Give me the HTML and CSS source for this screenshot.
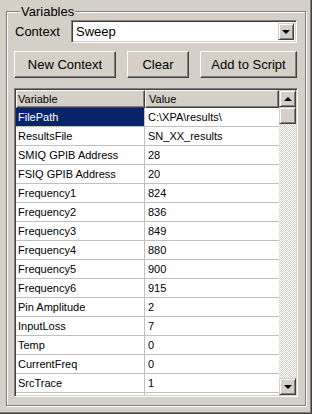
FILE: index.html
```html
<!DOCTYPE html>
<html lang="en">
<head>
    <meta charset="UTF-8">
    <meta name="viewport" content="width=device-width, initial-scale=1.0">
    <title>Variables</title>
    <link rel="stylesheet" href="styles.css">
</head>
<body>
    <div class="panel">
        <fieldset class="group">
            <legend>Variables</legend>

            <div class="context-row">
                <label class="context-label">Context</label>
                <div class="combo">
                    <span class="combo-text">Sweep</span>
                    <span class="combo-btn"><span class="tri-down"></span></span>
                </div>
            </div>

            <div class="button-row">
                <button class="btn btn-new">New Context</button>
                <button class="btn btn-clear">Clear</button>
                <button class="btn btn-add">Add to Script</button>
            </div>

            <div class="grid-box">
                <div class="grid">
                    <div class="grid-head">
                        <div class="hcell col-var">Variable</div>
                        <div class="hcell col-val">Value</div>
                    </div>
                    <div class="row selected">
                        <div class="cell col-var">FilePath</div>
                        <div class="cell col-val">C:\XPA\results\</div>
                    </div>
                    <div class="row">
                        <div class="cell col-var">ResultsFile</div>
                        <div class="cell col-val">SN_XX_results</div>
                    </div>
                    <div class="row">
                        <div class="cell col-var">SMIQ GPIB Address</div>
                        <div class="cell col-val">28</div>
                    </div>
                    <div class="row">
                        <div class="cell col-var">FSIQ GPIB Address</div>
                        <div class="cell col-val">20</div>
                    </div>
                    <div class="row">
                        <div class="cell col-var">Frequency1</div>
                        <div class="cell col-val">824</div>
                    </div>
                    <div class="row">
                        <div class="cell col-var">Frequency2</div>
                        <div class="cell col-val">836</div>
                    </div>
                    <div class="row">
                        <div class="cell col-var">Frequency3</div>
                        <div class="cell col-val">849</div>
                    </div>
                    <div class="row">
                        <div class="cell col-var">Frequency4</div>
                        <div class="cell col-val">880</div>
                    </div>
                    <div class="row">
                        <div class="cell col-var">Frequency5</div>
                        <div class="cell col-val">900</div>
                    </div>
                    <div class="row">
                        <div class="cell col-var">Frequency6</div>
                        <div class="cell col-val">915</div>
                    </div>
                    <div class="row">
                        <div class="cell col-var">Pin Amplitude</div>
                        <div class="cell col-val">2</div>
                    </div>
                    <div class="row">
                        <div class="cell col-var">InputLoss</div>
                        <div class="cell col-val">7</div>
                    </div>
                    <div class="row">
                        <div class="cell col-var">Temp</div>
                        <div class="cell col-val">0</div>
                    </div>
                    <div class="row">
                        <div class="cell col-var">CurrentFreq</div>
                        <div class="cell col-val">0</div>
                    </div>
                    <div class="row">
                        <div class="cell col-var">SrcTrace</div>
                        <div class="cell col-val">1</div>
                    </div>
                    <div class="row">
                        <div class="cell col-var"></div>
                        <div class="cell col-val"></div>
                    </div>
                </div>

                <div class="vscroll">
                    <div class="sbtn"><span class="tri-up"></span></div>
                    <div class="thumb"></div>
                    <div class="track"></div>
                    <div class="sbtn"><span class="tri-down"></span></div>
                </div>
            </div>
        </fieldset>
    </div>
</body>
</html>
```

FILE: styles.css
```css
body {
    margin: 0;
    background-color: #d4d0c8;
    font-family: "Liberation Sans", Arial, sans-serif;
    color: #000;
}

.panel {
    width: 312px;
    height: 414px;
    box-sizing: border-box;
    padding: 0 6px 0 6px;
    box-shadow: inset -1px -1px #404040, inset -2px -2px #808080;
    overflow: hidden;
}

/* group box with etched border */
.group {
    margin: 4px 0 0 0;
    padding: 1px 7px 7px 7px;
    width: 300px;
    height: 402px;
    box-sizing: border-box;
    border: 1px solid #808080;
    box-shadow: inset 1px 1px #fff, 1px 1px #fff;
}

.group legend {
    font-size: 13px;
    line-height: 15px;
    padding: 0 1px;
    margin-left: 6px;
    background-color: #d4d0c8;
}

.context-row {
    display: flex;
    align-items: center;
    height: 23px;
}

.context-label {
    font-size: 13px;
    width: 56px;
    padding-left: 1px;
}

.combo {
    flex: 1;
    height: 23px;
    box-sizing: border-box;
    margin-right: 1px;
    background-color: #fff;
    border: 1px solid;
    border-color: #808080 #fff #fff #808080;
    box-shadow: inset 1px 1px #404040, inset -1px -1px #d4d0c8;
    display: flex;
    align-items: center;
    padding: 2px 2px 2px 4px;
}

.combo-text {
    flex: 1;
    font-size: 13px;
}

.combo-btn {
    width: 16px;
    height: 17px;
    box-sizing: border-box;
    background-color: #d4d0c8;
    border: 1px solid;
    border-color: #d4d0c8 #404040 #404040 #d4d0c8;
    box-shadow: inset 1px 1px #fff, inset -1px -1px #808080;
    display: flex;
    align-items: center;
    justify-content: center;
}

.tri-down {
    width: 0;
    height: 0;
    border-left: 4px solid transparent;
    border-right: 4px solid transparent;
    border-top: 4px solid #000;
}

.tri-up {
    width: 0;
    height: 0;
    border-left: 4px solid transparent;
    border-right: 4px solid transparent;
    border-bottom: 4px solid #000;
}

.button-row {
    display: flex;
    justify-content: space-between;
    margin-top: 8px;
    padding-right: 1px;
}

.btn {
    height: 27px;
    box-sizing: border-box;
    font-family: "Liberation Sans", Arial, sans-serif;
    font-size: 13px;
    color: #000;
    background-color: #d4d0c8;
    border: 1px solid;
    border-color: #fff #404040 #404040 #fff;
    box-shadow: inset -1px -1px #808080;
    padding: 0;
}

.btn-new {
    width: 102px;
}

.btn-clear {
    width: 62px;
}

.btn-add {
    width: 97px;
}

/* variables grid */
.grid-box {
    margin-top: 10px;
    height: 309px;
    box-sizing: border-box;
    border: 1px solid;
    border-color: #808080 #fff #fff #808080;
    box-shadow: inset 1px 1px #404040, inset -1px -1px #d4d0c8;
    padding: 1px;
    display: flex;
    background-color: #fff;
}

.grid {
    flex: 1;
    overflow: hidden;
    font-size: 11px;
}

.grid-head {
    display: flex;
    height: 18px;
}

.hcell {
    box-sizing: border-box;
    background-color: #d4d0c8;
    border: 1px solid;
    border-color: #fff #404040 #404040 #fff;
    box-shadow: inset -1px -1px #808080;
    padding: 2px 0 0 1px;
    line-height: 13px;
}

.col-var {
    width: 129px;
}

.col-val {
    flex: 1;
}

.hcell.col-val {
    padding-left: 3px;
}

.row {
    display: flex;
    height: 19px;
}

.cell {
    box-sizing: border-box;
    border-bottom: 1px solid #c0c0c0;
    padding: 3px 0 0 2px;
    line-height: 13px;
    white-space: nowrap;
}

.cell.col-var {
    border-right: 1px solid #c0c0c0;
}

.cell.col-val {
    padding-left: 3px;
}

.row.selected .col-var {
    background-color: #0a246a;
    color: #fff;
}

.vscroll {
    width: 17px;
    display: flex;
    flex-direction: column;
}

.sbtn, .thumb {
    box-sizing: border-box;
    background-color: #d4d0c8;
    border: 1px solid;
    border-color: #d4d0c8 #404040 #404040 #d4d0c8;
    box-shadow: inset 1px 1px #fff, inset -1px -1px #808080;
}

.sbtn {
    height: 17px;
    display: flex;
    align-items: center;
    justify-content: center;
}

.thumb {
    height: 17px;
}

.track {
    flex: 1;
    background-image: conic-gradient(#fff 25%, #d4d0c8 0 50%, #fff 0 75%, #d4d0c8 0);
    background-size: 2px 2px;
}
```
